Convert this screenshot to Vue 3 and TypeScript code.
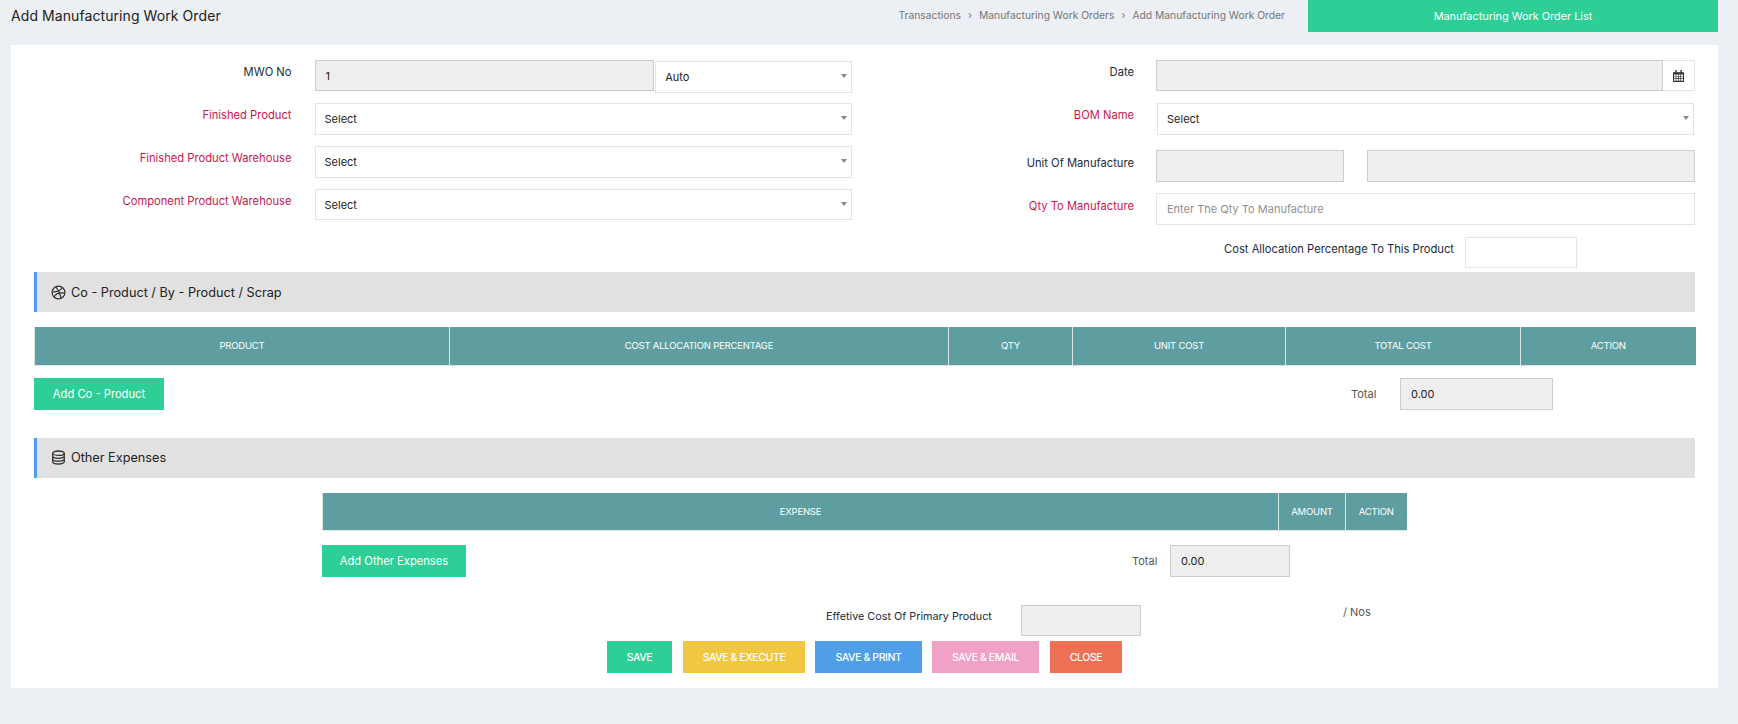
<script setup lang="ts">
interface Btn { label: string; cls: string }
const coCols: { label: string; width: number }[] = [
  { label: 'PRODUCT', width: 415 },
  { label: 'COST ALLOCATION PERCENTAGE', width: 499 },
  { label: 'QTY', width: 124 },
  { label: 'UNIT COST', width: 213 },
  { label: 'TOTAL COST', width: 235 },
  { label: 'ACTION', width: 175 },
]
const expCols: { label: string; width: number }[] = [
  { label: 'EXPENSE', width: 956 },
  { label: 'AMOUNT', width: 67 },
  { label: 'ACTION', width: 61 },
]
const actions: Btn[] = [
  { label: 'SAVE', cls: 'a-save' },
  { label: 'SAVE & EXECUTE', cls: 'a-exec' },
  { label: 'SAVE & PRINT', cls: 'a-print' },
  { label: 'SAVE & EMAIL', cls: 'a-email' },
  { label: 'CLOSE', cls: 'a-close' },
]
</script>

<template>
  <div class="page">
    <header class="top">
      <h1 class="title">Add Manufacturing Work Order</h1>
      <nav class="crumbs">
        <span>Transactions</span><i>›</i><span>Manufacturing Work Orders</span><i>›</i><span>Add Manufacturing Work Order</span>
      </nav>
      <button class="list-btn">Manufacturing Work Order List</button>
    </header>

    <main class="card">
      <div class="form">
        <div class="col left">
          <div class="row r1">
            <label class="lab">MWO No</label>
            <input class="ctl dis mwo" value="1" readonly />
            <div class="sel auto"><span>Auto</span></div>
          </div>
          <div class="row r2">
            <label class="lab req">Finished Product</label>
            <div class="sel grow"><span>Select</span></div>
          </div>
          <div class="row r2">
            <label class="lab req">Finished Product Warehouse</label>
            <div class="sel grow"><span>Select</span></div>
          </div>
          <div class="row r2">
            <label class="lab req">Component Product Warehouse</label>
            <div class="sel grow"><span>Select</span></div>
          </div>
        </div>

        <div class="col right">
          <div class="row rr1">
            <label class="lab">Date</label>
            <div class="date">
              <input class="ctl dis grow" readonly />
              <span class="addon">
                <svg width="11" height="12" viewBox="0 0 11 12" aria-hidden="true">
                  <path fill="#333" d="M0 2.2h11V12H0z" />
                  <path fill="#fff" d="M1 4.4h1.7v1.5H1zM3.3 4.4H5v1.5H3.3zM5.7 4.4h1.7v1.5H5.7zM8.1 4.4H10v1.5H8.1zM1 6.6h1.7v1.5H1zM3.3 6.6H5v1.5H3.3zM5.7 6.6h1.7v1.5H5.7zM8.1 6.6H10v1.5H8.1zM1 8.8h1.7v1.9H1zM3.3 8.8H5v1.9H3.3zM5.7 8.8h1.7v1.9H5.7zM8.1 8.8H10v1.9H8.1z" />
                  <path fill="#333" d="M2.2 0h1.4v3H2.2zM7.4 0h1.4v3H7.4z" />
                </svg>
              </span>
            </div>
          </div>
          <div class="row rr2">
            <label class="lab req">BOM Name</label>
            <div class="sel grow bom"><span>Select</span></div>
          </div>
          <div class="row rr3">
            <label class="lab">Unit Of Manufacture</label>
            <input class="ctl dis unit-a" readonly />
            <input class="ctl dis grow unit-b" readonly />
          </div>
          <div class="row rr4">
            <label class="lab req">Qty To Manufacture</label>
            <input class="ctl plain grow" placeholder="Enter The Qty To Manufacture" />
          </div>
          <div class="alloc">
            <label class="lab-free">Cost Allocation Percentage To This Product</label>
            <input class="ctl plain alloc-in" />
          </div>
        </div>
      </div>

      <section class="bar">
        <svg class="bar-ic" width="15" height="15" viewBox="0 0 15 15" fill="none" stroke="#333" stroke-width="1.2" aria-hidden="true">
          <circle cx="7.5" cy="7.5" r="6.4" />
          <path d="M5 1.8c2.3 3 4.2 7 5.2 11.2M1.2 6.8c3.6.3 7.6-.8 10.3-3.9M3 12c1.6-3 5-4.8 10.8-3.8" />
        </svg>
        <span>Co - Product / By - Product / Scrap</span>
      </section>

      <table class="grid co">
        <colgroup><col v-for="c in coCols" :key="c.label" :style="{ width: c.width + 'px' }" /></colgroup>
        <thead><tr><th v-for="c in coCols" :key="c.label">{{ c.label }}</th></tr></thead>
      </table>

      <div class="add-row co-add">
        <button class="add">Add Co - Product</button>
        <span class="total">Total</span>
        <input class="ctl dis tot-in" value="0.00" readonly />
      </div>

      <section class="bar bar2">
        <svg class="bar-ic" width="15" height="15" viewBox="0 0 15 15" fill="none" stroke="#333" stroke-width="1.3" aria-hidden="true">
          <ellipse cx="7.5" cy="3.2" rx="5.8" ry="2.2" />
          <path d="M1.7 3.2v8.6c0 1.2 2.6 2.2 5.8 2.2s5.8-1 5.8-2.2V3.2M1.7 6.1c0 1.2 2.6 2.2 5.8 2.2s5.8-1 5.8-2.2M1.7 9c0 1.2 2.6 2.2 5.8 2.2s5.8-1 5.8-2.2" />
        </svg>
        <span>Other Expenses</span>
      </section>

      <div class="exp-wrap">
        <table class="grid exp">
          <colgroup><col v-for="c in expCols" :key="c.label" :style="{ width: c.width + 'px' }" /></colgroup>
          <thead><tr><th v-for="c in expCols" :key="c.label">{{ c.label }}</th></tr></thead>
        </table>
        <div class="add-row exp-add">
          <button class="add add2">Add Other Expenses</button>
          <span class="total">Total</span>
          <input class="ctl dis tot-in2" value="0.00" readonly />
        </div>
      </div>

      <div class="eff">
        <label class="eff-lab">Effetive Cost Of Primary Product</label>
        <input class="ctl dis eff-in" readonly />
        <span class="nos">/ Nos</span>
      </div>

      <div class="actions">
        <button v-for="a in actions" :key="a.label" class="act" :class="a.cls">{{ a.label }}</button>
      </div>
    </main>
  </div>
</template>

<style>
html, body { margin: 0; background: #eceff4; }
</style>

<style scoped>
* { box-sizing: border-box; }
.page {
  height: 724px;
  overflow: hidden;
  background: #eceff4;
  font-family: Inter, "Open Sans", sans-serif;
  font-size: 11.2px;
  color: #1c2a3a;
}
.top { display: flex; align-items: flex-start; height: 45px; padding: 0 20px 0 11px; }
.title { margin: 6px 0 0; font-size: 14px; letter-spacing: 0.08px; font-weight: 400; line-height: 20px; color: #222; flex: 1; }
.crumbs { display: flex; gap: 7px; margin: 7px 23px 0 0; font-size: 10.3px; line-height: 16px; color: #777; }
.crumbs i { font-style: normal; }
.list-btn {
  width: 410px; height: 32px; border: 0; background: #2ecf97; color: #fff;
  font: 400 10.9px Inter, sans-serif;
}
.card { margin: 0 20px 0 11px; height: 643px; background: #fff; padding: 15px 23px 0; }
.form { display: flex; height: 212px; }
.col.left { width: 818px; }
.col.right { margin-left: 137px; width: 706px; }
.row { display: flex; align-items: flex-start; }
.r1 { height: 32px; margin-bottom: 11px; }
.r2 { height: 32px; margin-bottom: 11px; padding-left: 1px; }
.r2:last-child .sel { height: 31px; }
.lab {
  width: 257.5px; flex: none; text-align: right; padding-right: 0; margin-right: 23px;
  line-height: 24px; color: #1c2a3a;
}
.r2 .lab { width: 256.5px; }
.lab.req { color: #c9184f; }
.ctl {
  height: 31px; border: 1px solid #d4d4d4; padding: 0 10px; outline: 0; display: block;
  font: 400 11px Inter, sans-serif; color: #222; border-radius: 0; background: #fff; min-width: 0;
}
.dis { background: #eee; border-color: #ccc; }
.plain { border-color: #e4e4e4; }
.plain::placeholder { color: #8f8f8f; opacity: 1; }
.mwo { width: 340px; }
.grow { flex: 1; min-width: 0; }
.sel {
  position: relative; height: 32px; border: 1px solid #e3e3e3; background: #fff;
  display: flex; align-items: center; padding: 0 9px; font-size: 11px; color: #222;
}
.sel::after {
  content: ""; position: absolute; right: 4px; top: 12px; border: 3px solid transparent; border-top: 4px solid #888; border-bottom: 0;
}
.auto { width: 197px; margin: 1px 0 0 1px; }
.right .lab { width: 145px; margin-right: 22px; }
.rr1 { height: 32px; margin-bottom: 11px; }
.date { flex: 1; display: flex; height: 31px; }
.addon { width: 32px; border: 1px solid #e3e3e3; border-left: 0; display: flex; align-items: center; justify-content: center; }
.rr2 { height: 32px; margin-bottom: 15px; }
.bom { margin: 0 1px; }
.rr3 { height: 32px; margin-bottom: 11px; }
.rr3 .ctl { height: 32px; }
.unit-a { width: 188px; margin-right: 23px; }
.rr3 .lab { line-height: 26px; }
.rr4 { height: 32px; margin-bottom: 12px; }
.rr4 .ctl { height: 32px; }
.rr4 .lab { line-height: 26px; }
.alloc { display: flex; align-items: flex-start; margin-left: 192px; }
.lab-free { line-height: 24px; width: 273px; text-align: right; margin-right: 11px; }
.alloc-in { width: 112px; }
.bar {
  height: 40px; background: #e1e1e1; border-left: 3px solid #4f9ee8;
  display: flex; align-items: center; padding-left: 14px; font-size: 12.7px; color: #222;
}
.bar-ic { margin-right: 5px; flex: none; }
.grid { border-collapse: collapse; table-layout: fixed; width: 100%; margin-top: 15px; }
.grid th {
  height: 38px; padding: 0; background: #5f9ea0; color: #fff; font-size: 9.5px; letter-spacing: -0.2px; font-weight: 400;
  border: 1px solid #e0e6e8; border-top: 0; text-align: center;
}
.grid th:first-child { border-left-color: #d9e3e3; }
.grid th:last-child { border-right: 0; }
.add-row { display: flex; align-items: center; height: 33px; margin-top: 12px; }
.add {
  height: 32px; width: 130px; border: 0; background: #2ecf97; color: #fff; font: 400 11.2px Inter, sans-serif; padding: 0;
}
.total { color: #555; font-size: 11px; }
.co-add .total { margin-left: 1187px; width: 49px; }
.tot-in { width: 153px; height: 32px; }
.bar2 { margin-top: 27px; }
.exp-wrap { width: 1084px; margin-left: 288px; }
.exp { width: 1084px; }
.exp-add { margin-top: 13px; }
.add2 { width: 144px; }
.exp-add .total { margin-left: 666px; width: 38px; }
.tot-in2 { width: 120px; height: 32px; }
.eff { display: flex; align-items: flex-start; height: 31px; margin-top: 28px; margin-left: 792px; }
.eff-lab { width: 172px; margin-right: 23px; line-height: 24px; white-space: nowrap; font-size: 10.8px; }
.eff-in { width: 120px; }
.nos { margin-left: 202px; line-height: 14px; color: #555; font-size: 11px; }
.actions { display: flex; margin-top: 5px; margin-left: 573px; }
.act {
  height: 32px; border: 0; color: #fff; font: 500 10.5px Inter, sans-serif; letter-spacing: -0.4px; padding: 0; margin-right: 10px;
}
.a-save { width: 65px; background: #2ecf97; margin-right: 11px; }
.a-exec { width: 122px; background: #f1c640; }
.a-print { width: 107px; background: #4f9ee8; }
.a-email { width: 107px; background: #f1a0c6; margin-right: 11px; }
.a-close { width: 72px; background: #ef7155; }
</style>
